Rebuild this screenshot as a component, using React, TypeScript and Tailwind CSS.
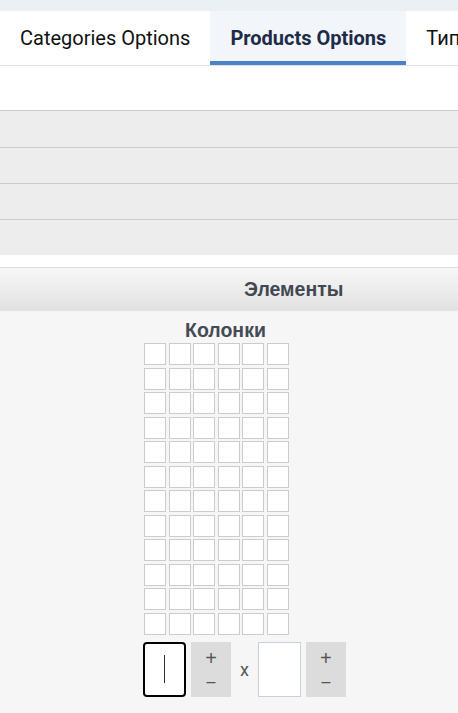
import React from 'react';

const tabs = ['Categories Options', 'Products Options', 'Типы'];

// Stepper: кнопки +/- рядом с полем ввода
function Stepper() {
  return (
    <div className="flex h-[55px] w-[40px] flex-col items-center justify-center bg-[#dcdcdc] text-[#555] leading-none">
      <span className="text-[20px]">+</span>
      <span className="mt-[6px] text-[16px]">–</span>
    </div>
  );
}

export default function App() {
  const rows = Array.from({ length: 12 });
  const cols = Array.from({ length: 6 });
  return (
    <div className="h-[713px] w-[458px] overflow-hidden bg-[#f6f6f6] font-['Liberation_Sans',Arial,sans-serif]">
      <div className="h-[11px] bg-[#ebf0f5]" />
      <div className="flex h-[55px] border-b border-[#dfe3e8] bg-white font-['Roboto',sans-serif] text-[20px] whitespace-nowrap">
        {tabs.map((t, i) => (
          <div
            key={t}
            className={
              i === 1
                ? 'flex shrink-0 items-center border-b-4 border-[#4f81c7] bg-[#f2f5f9] px-[20px] pt-[4px] font-bold text-[#1d2b48]'
                : 'flex shrink-0 items-center px-[20px] text-[#111]'
            }
          >
            {t}
          </div>
        ))}
      </div>
      <div className="h-[45px] border-b border-[#cccccc] bg-white" />
      <div className="h-[37px] border-b border-[#cccccc] bg-[#ededed]" />
      <div className="h-[36px] border-b border-[#cccccc] bg-[#ededed]" />
      <div className="h-[36px] border-b border-[#cccccc] bg-[#ededed]" />
      <div className="h-[35px] bg-[#ededed]" />
      <div className="h-[13px] border-b border-[#dddddd] bg-white" />
      <div className="flex h-[43px] items-center bg-gradient-to-b from-[#f7f7f7] to-[#e1e1e1] pl-[244px] text-[19.5px] font-bold text-[#424851]">
        Элементы
      </div>
      <div className="pt-[8px]">
        <div className="pl-[185px] text-[19.5px] font-bold leading-[22px] text-[#454b55]">Колонки</div>
        <div className="ml-[144px] mt-[2px] flex w-max flex-col gap-[2.5px]">
          {rows.map((_, r) => (
            <div key={r} className="flex gap-[2.5px]">
              {cols.map((_, c) => (
                <div key={c} className="h-[22px] w-[22px] border border-[#cccccc] bg-white" />
              ))}
            </div>
          ))}
        </div>
        <div className="ml-[143px] mt-[7px] flex items-center">
          <div className="flex h-[55px] w-[43px] items-center justify-center rounded-[4px] border-2 border-black bg-white">
            <div className="h-[28px] w-px bg-[#333]" />
          </div>
          <div className="ml-[5px]">
            <Stepper />
          </div>
          <span className="mx-[9px] font-['Roboto',sans-serif] text-[18px] text-[#555]">x</span>
          <div className="h-[55px] w-[43px] border border-[#c8d0dc] bg-white" />
          <div className="ml-[5px]">
            <Stepper />
          </div>
        </div>
      </div>
    </div>
  );
}
